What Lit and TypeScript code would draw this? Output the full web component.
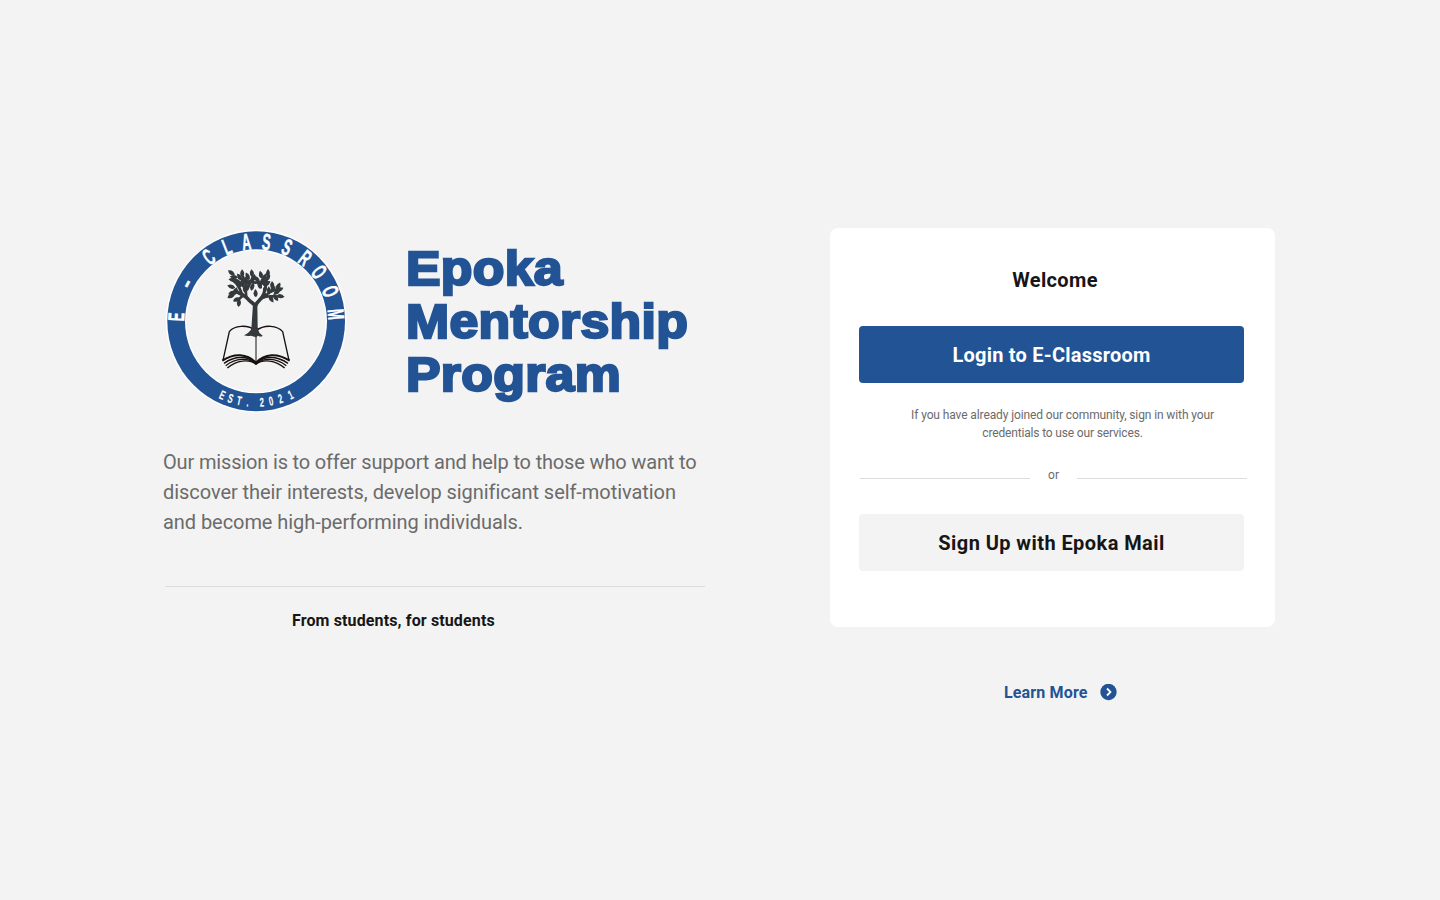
import { LitElement, html, svg, css } from "lit";
import { customElement } from "lit/decorators.js";

type Glyph = [string, number];

const TOP: Glyph[] = [
  ["E", -87], ["–", -61.5], ["C", -36.5], ["L", -21.4], ["A", -7], ["S", 7.4],
  ["S", 22.7], ["R", 37.8], ["O", 52], ["O", 68.1], ["M", 85],
];
const BOTTOM: Glyph[] = [
  ["E", 24.6], ["S", 18.4], ["T", 12], [".", 5.9],
  ["2", -4], ["0", -10.5], ["2", -17.4], ["1", -25],
];
// x, y, angle of each leaf
const LEAVES: [number, number, number][] = [
  [214, 147, -50], [222, 160, -80], [246, 149, 0], [238, 160, -30], [218, 168, -80], [234, 174, -40],
  [214, 189, -70], [216, 206, 75], [213, 215, 70], [226, 202, 20], [230, 226, 70], [236, 237, 10],
  [262, 158, -20], [256, 166, 40], [275, 149, -5], [280, 162, 20], [268, 174, 60], [248, 180, 0],
  [276, 188, 20], [286, 208, 0], [290, 166, -40], [302, 153, -10], [312, 160, 30], [323, 148, 5],
  [322, 162, 40], [310, 174, 0], [298, 184, -30], [320, 178, 60], [336, 184, 0], [338, 196, 40],
  [354, 187, 30], [358, 196, 70], [350, 204, 60], [361, 216, 100], [348, 220, 150], [334, 224, 150],
  [326, 200, 0], [314, 196, 10], [254, 194, 10],
];

@customElement("app-root")
export class AppRoot extends LitElement {
  static styles = css`
    :host { display: block; width: 1440px; height: 900px; overflow: hidden; background: #f3f3f3;
      font-family: Roboto, "Noto Sans", sans-serif; color: #161616; }
    .page { display: flex; align-items: flex-start; gap: 125px; padding: 224px 165px 0 160px; box-sizing: border-box; }
    .intro { width: 545px; }
    .brand { display: flex; gap: 54px; }
    .logo { width: 192px; height: 192px; display: block; flex: none; }
    h1 { margin: 18px 0 0; font: 700 48px/53px "Liberation Sans", Arial, sans-serif; letter-spacing: 0.3px;
      color: #225395; -webkit-text-stroke: 2.4px #225395; white-space: nowrap;
      transform: scaleX(1.078); transform-origin: 0 0; }
    h1 span, .mission span, .hint span { display: block; white-space: nowrap; }
    .mission { margin: 31px 0 0 3px; font-size: 20px; line-height: 30px; color: #6b6b6b; letter-spacing: -0.06px; }
    .mission .first { letter-spacing: -0.16px; }
    .rule { height: 1px; background: #dcdcdc; margin: 49px 0 0 5px; }
    .motto { margin: 22px 0 0 132px; font-size: 16px; line-height: 24px; font-weight: 700; letter-spacing: 0.13px; }
    .side { width: 445px; padding-top: 4px; }
    .card { height: 399px; background: #fff; border-radius: 8px; padding: 37px 28px 0 29px; box-sizing: border-box; }
    h2 { margin: 0 0 0 4px; font-size: 20px; line-height: 30px; font-weight: 700; text-align: center; letter-spacing: 0.35px; }
    .btn { display: block; width: 385px; height: 57px; border: 0; border-radius: 4px; padding: 1px 0 0;
      font: 700 20px/56px Roboto, sans-serif; text-align: center; }
    .login { margin-top: 31px; background: #225395; color: #fff; letter-spacing: 0.23px; }
    .signup { margin-top: 30px; background: #f3f3f3; color: #161616; letter-spacing: 0.43px; }
    .hint { margin: 23px 0 0 19px; font-size: 12px; line-height: 18px; color: #6b6b6b; text-align: center; letter-spacing: -0.11px; }
    .hint .last { letter-spacing: -0.16px; }
    .or { display: flex; justify-content: space-between; margin: 24px 0 0 1px; height: 18px; width: 387px;
      font-size: 12px; line-height: 18px; color: #6b6b6b; }
    .or i { width: 170px; height: 1px; margin-top: 12px; background: #dcdcdc; }
    .more { display: flex; align-items: center; gap: 12px; margin: 52px 0 0 174px; font-size: 16px; line-height: 24px;
      font-weight: 700; color: #225395; letter-spacing: 0.15px; }
    .more span { padding-top: 2px; }
    .more svg { display: block; width: 17px; height: 17px; }
    .ring { font-family: "Liberation Sans", Arial, sans-serif; font-weight: 700; fill: #fff; stroke: #fff; stroke-width: 1.5; text-anchor: middle; }
    .big { font-size: 69px; }
    .small { font-size: 38px; stroke-width: 0.5; }
  `;

  private logo() {
    return html`<svg class="logo" viewBox="0 0 576 576" role="img" aria-label="E-Classroom">
      <ellipse cx="288.5" cy="291.5" rx="271" ry="274" fill="#fff"/>
      <ellipse cx="288.5" cy="291.5" rx="266.5" ry="270" fill="#225395"/>
      <ellipse cx="288" cy="292" rx="213" ry="216" fill="#fff"/>
      <ellipse cx="288" cy="292" rx="209" ry="212" fill="#f3f3f3"/>
      ${TOP.map(([c, a]) => svg`<text class="ring big" transform="translate(288.5 291.5) rotate(${a}) translate(0 -216) scale(.55 1)">${c}</text>`)}
      ${BOTTOM.map(([c, a]) => svg`<text class="ring small" transform="translate(288.5 291.5) rotate(${a}) translate(0 257) scale(.6 1)">${c}</text>`)}
      <g fill="none" stroke="#17100f" stroke-linejoin="round">
        <path stroke-width="4" d="M189 409L208 323C222 304 262 300 288 320C314 300 352 304 368 323L387 409"/>
        <path stroke-width="3" d="M288 320V412"/>
        <path stroke-width="6" d="M187 410C222 386 262 388 288 416C314 388 352 386 389 410"/>
        <path stroke-width="4.5" d="M192 418C224 395 264 395 288 418C312 395 350 395 384 418"/>
        <path stroke-width="4" d="M197 425C228 402 264 400 288 420C312 400 348 402 379 425"/>
        <path stroke-width="4" d="M202 432C230 409 266 404 288 421C310 404 346 409 374 432"/>
      </g>
      <g fill="#343a3c">
        <path d="M279 240L274 315Q268 326 252 334Q262 338 273 335L288 340L294 335Q304 340 308 335L298 326Q294 318 293 308L292 240Z"/>
        ${LEAVES.map(([x, y, a]) => svg`<path transform="translate(${x} ${y}) rotate(${a})" d="M0 -13Q13 -1 2 12Q-12 3 0 -13Z"/>`)}
      </g>
      <g fill="none" stroke="#343a3c" stroke-width="8" stroke-linecap="round">
        <path stroke-width="11" d="M286 246C280 236 270 234 264 225C256 213 246 214 226 200M286 246C290 232 306 226 312 210"/>
        <path d="M262 224C252 208 262 196 258 176M250 214C236 226 240 224 234 228M246 210C240 196 236 182 222 172M306 222C320 214 330 218 346 216M312 210C310 196 322 190 318 174M318 214C330 200 340 200 354 196M262 196L278 160M240 186L250 160M300 190L306 168M230 178L262 172L286 176L320 172"/>
      </g>
    </svg>`;
  }

  render() {
    return html`<main class="page">
      <section class="intro">
        <div class="brand">${this.logo()}
          <h1><span>Epoka</span><span>Mentorship</span><span>Program</span></h1>
        </div>
        <p class="mission"><span class="first">Our mission is to offer support and help to those who want to</span><span>discover their interests, develop significant self-motivation</span><span>and become high-performing individuals.</span></p>
        <div class="rule"></div>
        <p class="motto">From students, for students</p>
      </section>
      <section class="side">
        <div class="card">
          <h2>Welcome</h2>
          <button class="btn login">Login to E-Classroom</button>
          <p class="hint"><span>If you have already joined our community, sign in with your</span><span class="last">credentials to use our services.</span></p>
          <div class="or"><i></i>or<i></i></div>
          <button class="btn signup">Sign Up with Epoka Mail</button>
        </div>
        <div class="more"><span>Learn More</span>
          <svg viewBox="0 0 17 17"><circle cx="8.5" cy="8" r="8.2" fill="#225395"/><path d="M7 4.5L10.5 8L7 11.5" fill="none" stroke="#fff" stroke-width="1.8"/></svg>
        </div>
      </section>
    </main>`;
  }
}
